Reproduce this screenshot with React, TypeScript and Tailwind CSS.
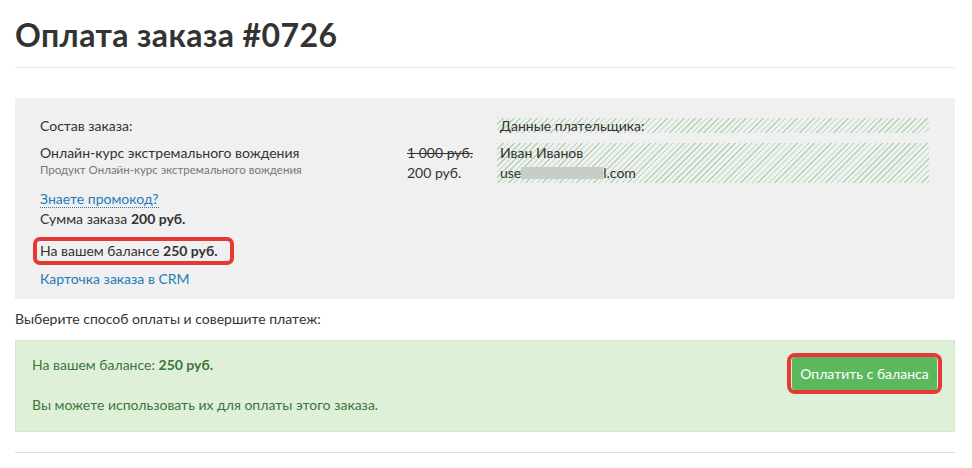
import React from 'react';

const hatch =
  'bg-[repeating-linear-gradient(135deg,#b1d6b2_0px,#b1d6b2_1px,transparent_1px,transparent_4px)]';

function OrderSummary() {
  return (
    <div className="mt-[30px] bg-[#f0f0f0] pl-[25px] pr-[26px] pt-[20px] pb-[10px] text-[14px] text-[#333]">
      <div className="flex">
        <div className="flex-1">
          <div className="leading-[15px]">Состав заказа:</div>
          <div className="mt-[10px] leading-[20px]">Онлайн-курс экстремального вождения</div>
          <div className="text-[11.5px] leading-[14px] text-[#777]">Продукт Онлайн-курс экстремального вождения</div>
        </div>
        <div className="w-[90px] pt-[25px] leading-[20px]">
          <div className="line-through">1 000 руб.</div>
          <div>200 руб.</div>
        </div>
        <div className="w-[432px]">
          <div className={`${hatch} h-[15px] pl-[3px] leading-[15px]`}>Данные плательщика:</div>
          <div className={`${hatch} mt-[10px] pl-[3px] leading-[20px]`}>
            <div>Иван Иванов</div>
            <div className="flex items-center">
              <span>use</span>
              <span className="inline-block h-[12px] w-[82px] bg-[#c6ccc6]" />
              <span>l.com</span>
            </div>
          </div>
        </div>
      </div>
      <div className="mt-[6px] leading-[20px]">
        <a className="border-b border-dotted border-[#1f7ab8] text-[#1f7ab8]">Знаете промокод?</a>
      </div>
      <div className="leading-[20px]">
        Сумма заказа <b>200 руб.</b>
      </div>
      <div className="mt-[8px] -ml-[7px] inline-block rounded-[7px] border-4 border-[#e53935] pl-[3px] pr-[12px] leading-[20px]">
        На вашем балансе <b>250 руб.</b>
      </div>
      <div className="mt-[4px] leading-[20px] text-[#1f7ab8]">Карточка заказа в CRM</div>
    </div>
  );
}

function BalancePanel() {
  return (
    <div className="mt-[11px] flex justify-between border border-[#d6e9c6] bg-[#dff0d8] pl-[16px] pr-[12px] pt-[14px] pb-[16px] text-[14px] text-[#3c763d]">
      <div className="leading-[20px]">
        <div>
          На вашем балансе: <b>250 руб.</b>
        </div>
        <div className="mt-[20px]">Вы можете использовать их для оплаты этого заказа.</div>
      </div>
      <div className="-mt-[2px] self-start rounded-[8px] border-4 border-[#e53935] px-px">
        <button className="h-[33px] w-[145px] rounded-[3px] bg-[#5cb85c] text-[14px] text-white">
          Оплатить с баланса
        </button>
      </div>
    </div>
  );
}

export default function App() {
  return (
    <div className="h-[468px] w-[972px] bg-white px-[15px] pr-[17px] font-['Lato','Open_Sans',sans-serif]">
      <h1 className="border-b border-[#e6e6e6] pt-[17px] pb-[14px] text-[32px] font-bold leading-[36px] tracking-[0.4px] text-[#333]">
        Оплата заказа #0726
      </h1>
      <OrderSummary />
      <div className="mt-[10px] text-[14px] leading-[20px] text-[#333]">Выберите способ оплаты и совершите платеж:</div>
      <BalancePanel />
      <div className="mt-[20px] border-t border-[#dddddd]" />
    </div>
  );
}
